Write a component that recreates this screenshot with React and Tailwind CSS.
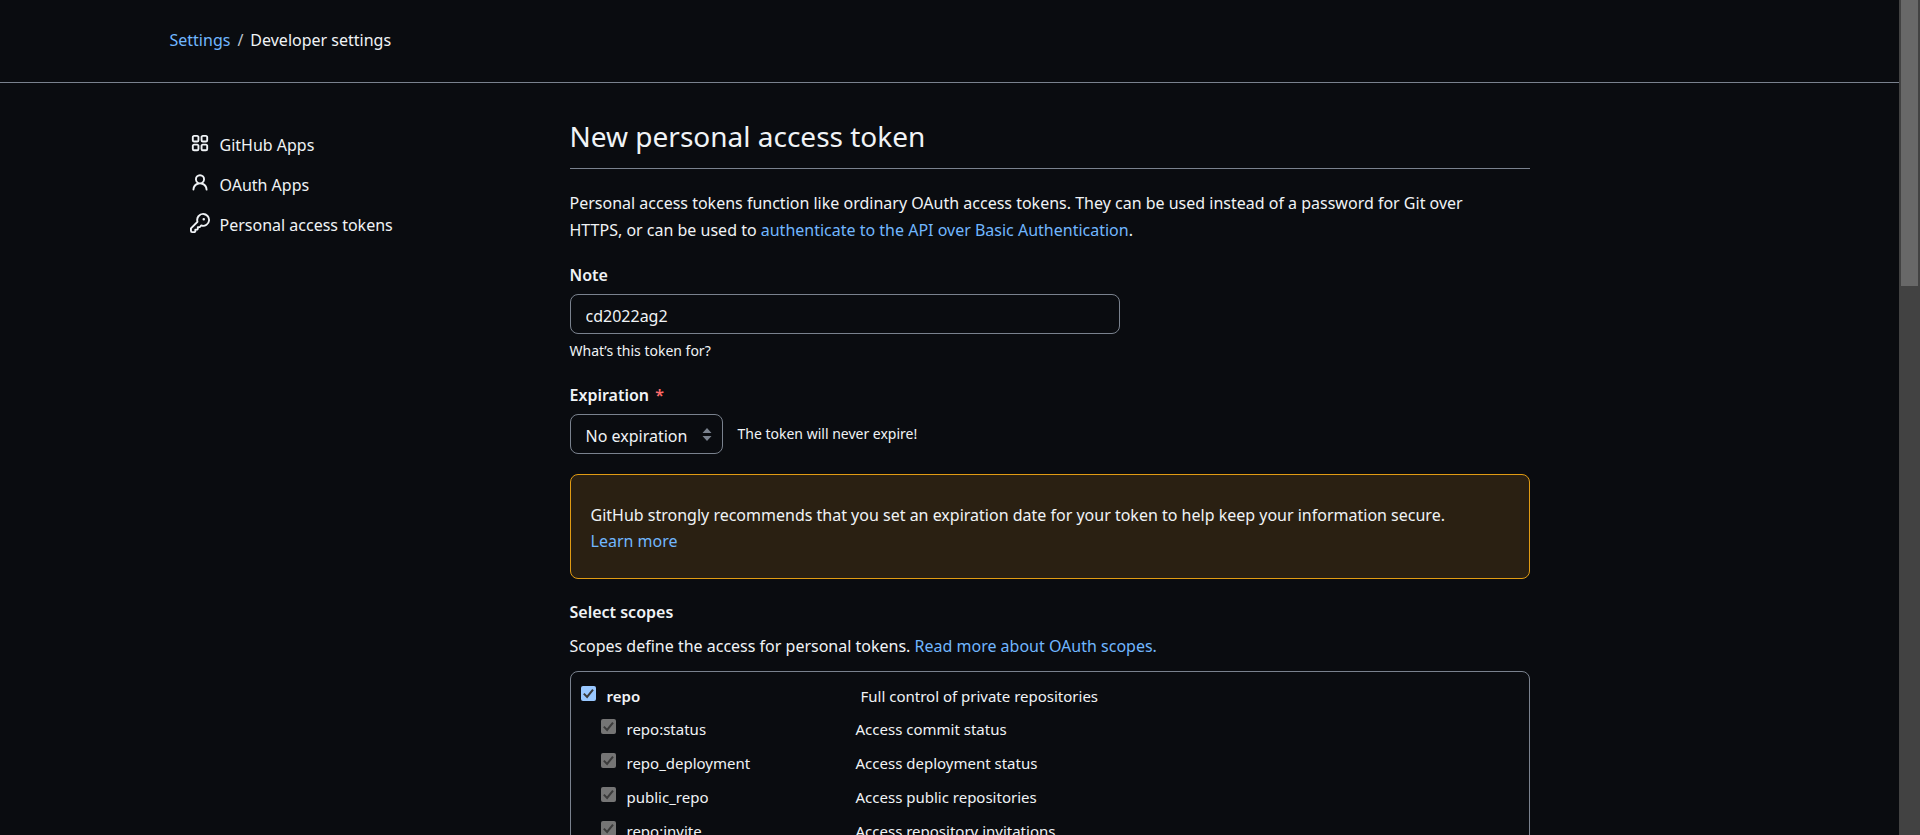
import React from "react";

const APPS =
  "M1.5 3.25c0-.966.784-1.75 1.75-1.75h2.5c.966 0 1.75.784 1.75 1.75v2.5A1.75 1.75 0 0 1 5.75 7.5h-2.5A1.75 1.75 0 0 1 1.5 5.75ZM3.25 3a.25.25 0 0 0-.25.25v2.5c0 .138.112.25.25.25h2.5A.25.25 0 0 0 6 5.75v-2.5A.25.25 0 0 0 5.75 3Z";
const PERSON =
  "M10.561 8.073a6.005 6.005 0 0 1 3.432 5.142.75.75 0 1 1-1.498.07 4.5 4.5 0 0 0-8.99 0 .75.75 0 0 1-1.498-.07 6.004 6.004 0 0 1 3.431-5.142 3.999 3.999 0 1 1 5.123 0ZM10.5 5a2.5 2.5 0 1 0-5 0 2.5 2.5 0 0 0 5 0Z";
const KEY =
  "M10.5 0a5.499 5.499 0 1 1-1.288 10.848l-.932.932a.749.749 0 0 1-.53.22H7v.75a.749.749 0 0 1-.22.53l-.5.5a.749.749 0 0 1-.53.22H5v.75a.749.749 0 0 1-.22.53l-.5.5a.749.749 0 0 1-.53.22h-2A1.75 1.75 0 0 1 0 14.25v-2c0-.199.079-.389.22-.53l4.932-4.932A5.5 5.5 0 0 1 10.5 0Zm-4 5.5c-.001.431.069.86.205 1.269a.75.75 0 0 1-.181.768L1.5 12.56v1.69c0 .138.112.25.25.25h1.69l.06-.06v-1.19a.75.75 0 0 1 .75-.75h1.19l.06-.06v-1.19a.75.75 0 0 1 .75-.75h1.19l1.023-1.025a.75.75 0 0 1 .768-.18A4 4 0 1 0 6.5 5.5ZM11 6a1 1 0 1 1 0-2 1 1 0 0 1 0 2Z";

function Icon({ children }) {
  return (
    <svg viewBox="0 0 16 16" className="size-5 shrink-0" fill="currentColor" fillRule="evenodd" aria-hidden="true">
      {children}
    </svg>
  );
}

function AppsIcon() {
  return (
    <Icon>
      <path d={APPS} />
      <path d={APPS} transform="translate(7 0)" />
      <path d={APPS} transform="translate(0 7)" />
      <path d={APPS} transform="translate(7 7)" />
    </Icon>
  );
}

const NAV = [
  { label: "GitHub Apps", icon: <AppsIcon /> },
  { label: "OAuth Apps", icon: <Icon><path d={PERSON} /></Icon> },
  { label: "Personal access tokens", icon: <Icon><path d={KEY} /></Icon> },
];

const SCOPES = [
  ["repo:status", "Access commit status"],
  ["repo_deployment", "Access deployment status"],
  ["public_repo", "Access public repositories"],
  ["repo:invite", "Access repository invitations"],
];

function Link({ children }) {
  return (
    <a href="#" className="text-[#71b7ff] hover:underline">
      {children}
    </a>
  );
}

function Checkbox({ id, disabled }) {
  return (
    <span className="mt-px grid size-[15px] shrink-0">
      <input
        id={id}
        type="checkbox"
        defaultChecked
        disabled={disabled}
        className="col-start-1 row-start-1 size-[15px] appearance-none rounded-xs bg-[#99c8ff] disabled:bg-[#757575]"
      />
      <svg viewBox="0 0 15 15" className="pointer-events-none col-start-1 row-start-1 size-[15px]" fill="none" aria-hidden="true">
        <path d="M2.8 7.6l3.3 3.3L12 3.6" stroke="#3b3b3b" strokeWidth="2" />
      </svg>
    </span>
  );
}

export default function App() {
  return (
    <div className="flex h-screen overflow-hidden bg-[#0a0c10] font-['Noto_Sans',sans-serif] text-base leading-[27px] text-[#f0f3f6]">
      <div className="min-w-0 flex-1 overflow-hidden">
        <header className="border-b border-[#7a828e]">
          <nav aria-label="Breadcrumb" className="mx-auto flex max-w-[1600px] gap-[7px] px-5 pt-[27px] pb-7">
            <Link>Settings</Link>
            <span className="text-[#bdc4cc]">/</span>
            <span>Developer settings</span>
          </nav>
        </header>

        <div className="mx-auto flex max-w-[1600px] px-5 pt-[29px]">
          <nav aria-label="Developer settings" className="w-[400px] shrink-0 pt-[13px] pl-5">
            <ul>
              {NAV.map(({ label, icon }) => (
                <li key={label}>
                  <a href="#" className="flex h-10 items-start gap-[10px] pt-2 leading-[25px]">
                    {icon}
                    <span>{label}</span>
                  </a>
                </li>
              ))}
            </ul>
          </nav>

          <main className="w-full max-w-[960px]">
            <h1 className="border-b border-[#7a828e] pt-1 pb-3 text-[28px] leading-10">New personal access token</h1>
            <p className="mt-[21px] max-w-[940px]">
              Personal access tokens function like ordinary OAuth access tokens. They can be used instead of a password for
              Git over HTTPS, or can be used to <Link>authenticate to the API over Basic Authentication</Link>.
            </p>

            <form>
              <label htmlFor="note" className="mt-[18px] block font-semibold">
                Note
              </label>
              <input
                id="note"
                type="text"
                defaultValue="cd2022ag2"
                className="mt-[5px] block h-10 w-full max-w-[550px] rounded-lg border border-[#7a828e] bg-transparent px-[15px] pt-1"
              />
              <p className="mt-[5px] text-sm leading-6">What’s this token for?</p>

              <label htmlFor="expiration" className="mt-[19px] block font-semibold">
                Expiration <span className="ml-[2px] text-[#ff6a69]">*</span>
              </label>
              <div className="mt-[5px] flex items-center gap-[15px]">
                <div className="grid w-[153px]">
                  <select
                    id="expiration"
                    className="col-start-1 row-start-1 h-10 w-full appearance-none rounded-lg border border-[#7a828e] bg-transparent pt-1 pr-7 pl-[15px]"
                  >
                    <option>No expiration</option>
                  </select>
                  <svg
                    viewBox="0 0 10 13"
                    className="pointer-events-none col-start-1 row-start-1 mr-[11px] h-[13px] w-[10px] self-center justify-self-end"
                    fill="#7a828e"
                    aria-hidden="true"
                  >
                    <path d="M5 0l4.5 5h-9zM5 13l4.5-5h-9z" />
                  </svg>
                </div>
                <p className="text-sm">The token will never expire!</p>
              </div>

              <div className="mt-5 rounded-lg border border-[#e09b13] bg-[#2a2012] px-5 pt-[27px] pb-6 leading-[26px]">
                <p>
                  GitHub strongly recommends that you set an expiration date for your token to help keep your information
                  secure.
                </p>
                <Link>Learn more</Link>
              </div>

              <h2 className="mt-5 font-semibold">Select scopes</h2>
              <p className="mt-[7px]">
                Scopes define the access for personal tokens. <Link>Read more about OAuth scopes.</Link>
              </p>

              <ul className="mt-[11px] rounded-lg border border-[#7a828e] px-[10px] pt-[13px] pb-3 text-[15px] leading-[22px]">
                <li className="flex h-[33px]">
                  <Checkbox id="repo" />
                  <label htmlFor="repo" className="ml-[11px] w-[254px] font-semibold">
                    repo
                  </label>
                  <span>Full control of private repositories</span>
                </li>
                {SCOPES.map(([name, text]) => (
                  <li key={name} className="flex h-[34px] pl-5">
                    <Checkbox id={name} disabled />
                    <label htmlFor={name} className="ml-[11px] w-[229px]">
                      {name}
                    </label>
                    <span>{text}</span>
                  </li>
                ))}
              </ul>
            </form>
          </main>
        </div>
      </div>

      <div aria-hidden="true" className="w-[21px] shrink-0 bg-[#424242] px-[2px]">
        <div className="h-[286px] bg-[#686868]" />
      </div>
    </div>
  );
}
